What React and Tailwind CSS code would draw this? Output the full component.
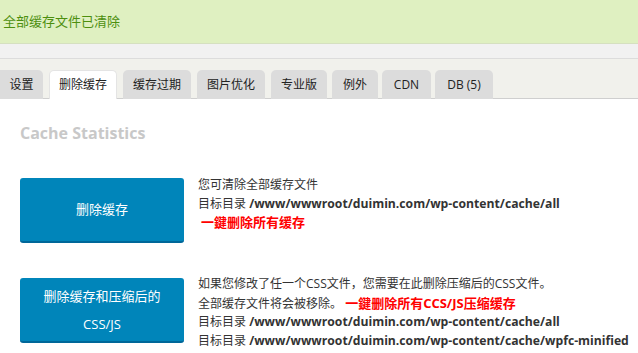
export default function App() {
  const tabs = [
    ["设置", "w-[43px] rounded-tl-none"],
    ["删除缓存", "w-[68px] ml-[6px]"],
    ["缓存过期", "w-[68px] ml-[6px]"],
    ["图片优化", "w-[68px] ml-[6px]"],
    ["专业版", "w-[56px] ml-[6px]"],
    ["例外", "w-[46px] ml-[5px]"],
    ["CDN", "w-[49px] ml-[4px]"],
    ["DB (5)", "w-[58px] ml-[4px]"],
  ];
  const font = { fontFamily: '"Open Sans", "Noto Sans CJK SC", sans-serif' };
  return (
    <div className="w-[638px] h-[353px] overflow-hidden bg-white text-[12px] text-[#333]" style={font}>
      <div className="h-[44px] bg-[#dff0c1] border-b border-[#d5e0c0] flex items-center pl-[3px] text-[13px] text-[#4d8f0f]">
        全部缓存文件已清除
      </div>
      <div className="h-[15px] bg-[#f1f1f1] border-b border-[#dcdcdc]" />
      <div className="h-[40px] bg-[#f1f1ec] border-b border-[#cfcfcf] flex items-end">
        {tabs.map(([t, cls], i) => (
          <div
            key={t}
            className={
              "h-[29px] -mb-px shrink-0 whitespace-nowrap flex items-center justify-center rounded-t-[5px] text-[12px] text-[#222] " +
              cls +
              (i === 1 ? " bg-white border border-b-0 border-[#e4e4e4]" : " bg-[#dcdcdc]")
            }
          >
            {t}
          </div>
        ))}
      </div>
      <div className="px-[20px] pt-[24px]">
        <h2 className="text-[16px] font-bold text-[#c8c8c8] leading-[20px]">Cache Statistics</h2>
        <div className="mt-[35px] flex gap-[14px]">
          <button className="w-[164px] h-[65px] shrink-0 rounded-[3px] bg-[#0085ba] border-b-2 border-[#006799] text-white text-[13px]">
            删除缓存
          </button>
          <div className="leading-[18.5px] -mt-[2px] whitespace-nowrap">
            <div>您可清除全部缓存文件</div>
            <div>目标目录 <b className="text-[12.2px]">/www/wwwroot/duimin.com/wp-content/cache/all</b></div>
            <div className="pl-[3px] text-[13px] text-[#ff0000] font-bold">一鍵删除所有缓存</div>
          </div>
        </div>
        <div className="mt-[35px] flex gap-[14px]">
          <button className="w-[164px] h-[65px] shrink-0 rounded-[3px] bg-[#0085ba] border-b-2 border-[#006799] text-white text-[13px] leading-[28px]">
            删除缓存和压缩后的<br />CSS/JS
          </button>
          <div className="leading-[18.5px] -mt-[3px] whitespace-nowrap">
            <div>如果您修改了任一个CSS文件，您需要在此删除压缩后的CSS文件。</div>
            <div>全部缓存文件将会被移除。 <span className="text-[13px] text-[#ff0000] font-bold">一鍵删除所有CCS/JS压缩缓存</span></div>
            <div>目标目录 <b className="text-[12.2px]">/www/wwwroot/duimin.com/wp-content/cache/all</b></div>
            <div>目标目录 <b className="text-[12.2px]">/www/wwwroot/duimin.com/wp-content/cache/wpfc-minified</b></div>
          </div>
        </div>
      </div>
    </div>
  );
}
